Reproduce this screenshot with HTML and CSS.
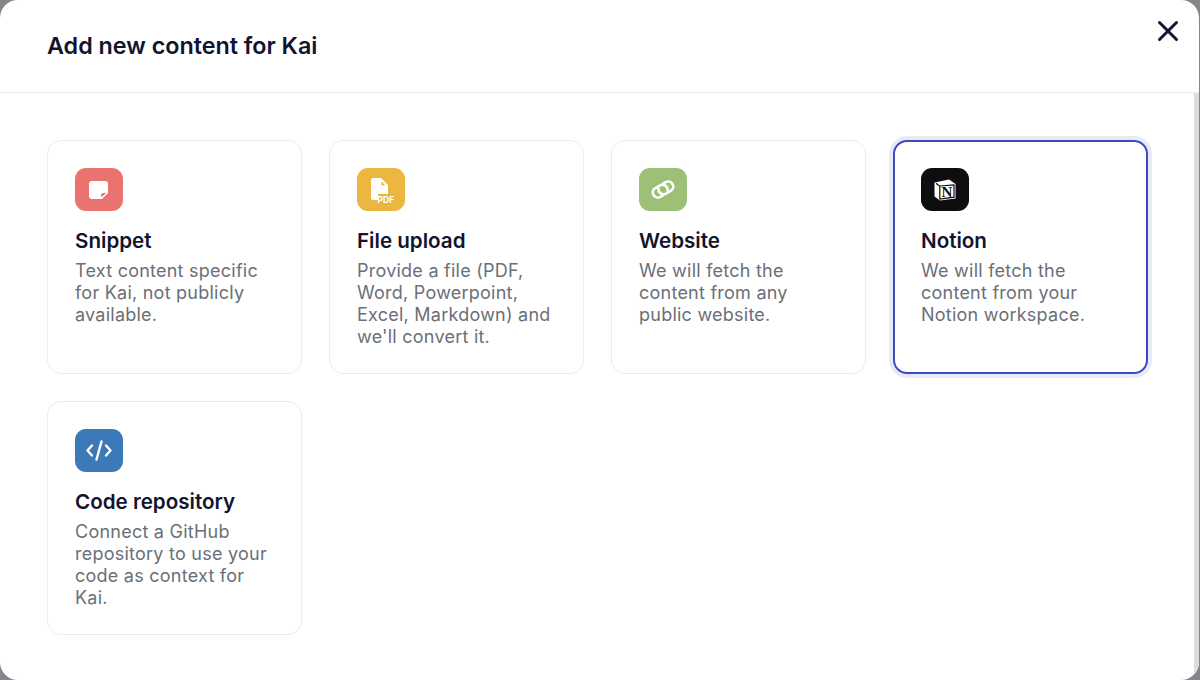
FILE: index.html
```html
<!DOCTYPE html>
<html lang="en">
<head>
    <meta charset="UTF-8">
    <meta name="viewport" content="width=device-width, initial-scale=1.0">
    <title>Add new content for Kai</title>
    <link rel="stylesheet" href="styles.css">
</head>
<body>
    <div class="modal">
        <header class="modal-header">
            <h1>Add new content for Kai</h1>
            <button class="close-button" aria-label="Close">
                <svg width="22" height="22" viewBox="0 0 22 22"><path d="M2.5 2.5 L19.5 19.5 M19.5 2.5 L2.5 19.5" stroke="#12142e" stroke-width="3" stroke-linecap="round"/></svg>
            </button>
        </header>

        <div class="cards">
            <div class="card">
                <div class="card-icon icon-snippet">
                    <svg width="48" height="43" viewBox="0 0 48 43">
                        <path d="M17 13 H30 A3 3 0 0 1 33 16 V25 L27 31 H17 A3 3 0 0 1 14 28 V16 A3 3 0 0 1 17 13 Z" fill="#fff"/>
                        <path d="M31.5 24.5 L26 29.5 L26.5 25.5 Z" fill="#e0656b"/>
                    </svg>
                </div>
                <h2>Snippet</h2>
                <p>Text content specific for Kai, not publicly available.</p>
            </div>
            <div class="card">
                <div class="card-icon icon-file">
                    <svg width="48" height="43" viewBox="0 0 48 43">
                        <path d="M16 10 H24 L31 17 V26 H21 V32 H16 A2 2 0 0 1 14 30 V12 A2 2 0 0 1 16 10 Z" fill="#fff"/>
                        <path d="M24.5 13 L28 17.5 H24.5 Z" fill="#edb740"/>
                        <text x="20.5" y="35" class="pdf-label">PDF</text>
                    </svg>
                </div>
                <h2>File upload</h2>
                <p>Provide a file (PDF, Word, Powerpoint, Excel, Markdown) and we'll convert it.</p>
            </div>
            <div class="card">
                <div class="card-icon icon-website">
                    <svg width="48" height="43" viewBox="0 0 48 43" fill="none" stroke="#fff" stroke-width="2.6" stroke-linecap="round">
                        <g transform="rotate(-30 24 21.5)">
                            <path d="M21 26.5 H18 A5 5 0 0 1 18 16.5 H23.5 A5 5 0 0 1 27.5 24.5"/>
                            <path d="M27 16.5 H30 A5 5 0 0 1 30 26.5 H24.5 A5 5 0 0 1 20.5 18.5"/>
                        </g>
                    </svg>
                </div>
                <h2>Website</h2>
                <p>We will fetch the content from any public website.</p>
            </div>
            <div class="card selected">
                <div class="card-icon icon-notion">
                    <svg width="48" height="43" viewBox="0 0 48 43">
                        <path d="M13.5 14.5 L28 11.5 L34.5 16 V30.5 L19 32.5 L13.5 28.5 Z" fill="#fff"/>
                        <path d="M15 15.3 L18.5 18 L33 17 V29.2 L18.8 31 V18" fill="none" stroke="#0e0e0e" stroke-width="1.2"/>
                        <text x="26" y="28.5" class="notion-label">N</text>
                    </svg>
                </div>
                <h2>Notion</h2>
                <p>We will fetch the content from your Notion workspace.</p>
            </div>
            <div class="card">
                <div class="card-icon icon-code">
                    <svg width="48" height="43" viewBox="0 0 48 43" fill="none" stroke="#fff" stroke-width="2.4" stroke-linecap="round" stroke-linejoin="round">
                        <path d="M17 16.5 L12.5 21.5 L17 26.5"/>
                        <path d="M31 16.5 L35.5 21.5 L31 26.5"/>
                        <path d="M26.5 12.5 L21.5 30.5"/>
                    </svg>
                </div>
                <h2>Code repository</h2>
                <p>Connect a GitHub repository to use your code as context for Kai.</p>
            </div>
        </div>
    </div>
</body>
</html>
```

FILE: styles.css
```css
* {
    margin: 0;
    padding: 0;
    box-sizing: border-box;
    font-family: Inter, 'Liberation Sans', sans-serif;
}

html,
body {
    height: 680px;
    overflow: hidden;
}

body {
    background: #85858a;
}

.modal {
    display: flex;
    flex-direction: column;
    width: 1199px;
    height: 680px;
    background: white;
    border-radius: 18px;
    overflow: hidden;
}

.modal-header {
    display: flex;
    justify-content: space-between;
    height: 93px;
    padding: 31px 20px 0 47px;
    border-bottom: 1px solid #eeeef0;
}

.modal-header h1 {
    font-size: 23.3px;
    line-height: 30px;
    font-weight: 600;
    color: #12142e;
}

.close-button {
    width: 22px;
    height: 22px;
    margin-top: -11px;
    background: none;
    border: none;
    cursor: pointer;
}

.cards {
    flex: 1;
    display: grid;
    grid-template-columns: repeat(4, 254.5px);
    grid-auto-rows: 233.5px;
    gap: 27.5px;
    align-content: start;
    padding: 47px 0 0 47px;
    border-right: 5px solid #dcdde0;
}

.card {
    padding: 27px 27px 0;
    background: white;
    border: 1px solid #ececef;
    border-radius: 14px;
}

.card.selected {
    border: 2px solid #3b4cc0;
    padding: 26px 26px 0;
    box-shadow: 0 0 0 4px #e8eaf8;
}

.card-icon {
    width: 48px;
    height: 43px;
    border-radius: 11px;
}

.card-icon svg {
    display: block;
}

.icon-snippet {
    background: #ea7370;
}

.icon-file {
    background: #ebb741;
}

.icon-website {
    background: #9dc077;
}

.icon-notion {
    background: #0e0e0e;
}

.icon-code {
    background: #3b79b8;
}

.pdf-label {
    font-size: 8.5px;
    font-weight: 700;
    fill: white;
}

.notion-label {
    font-family: 'Liberation Serif', serif;
    font-size: 15px;
    font-weight: 700;
    text-anchor: middle;
    fill: #0e0e0e;
}

.card h2 {
    margin-top: 17px;
    font-size: 20.6px;
    line-height: 25px;
    font-weight: 600;
    color: #12142e;
}

.card p {
    margin-top: 7px;
    font-size: 18px;
    line-height: 22px;
    letter-spacing: 0.24px;
    color: #6b6f78;
}
```
